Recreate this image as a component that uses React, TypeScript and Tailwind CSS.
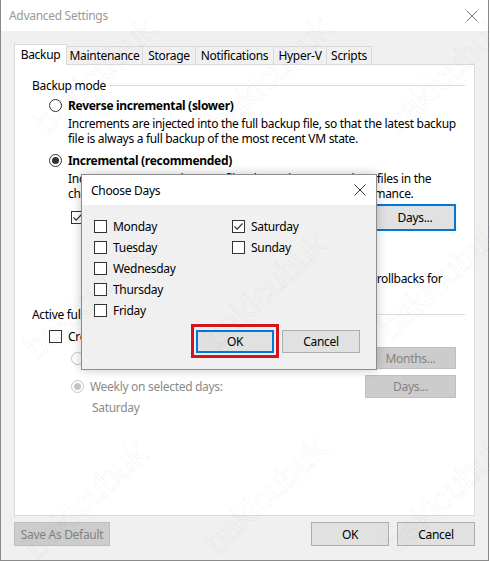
import React from "react";

const font = "font-['Segoe_UI','Noto_Sans',sans-serif]";

const Radio = ({ checked, disabled }: { checked?: boolean; disabled?: boolean }) => (
  <span
    className={`w-[13px] h-[13px] shrink-0 rounded-full border bg-white flex items-center justify-center ${
      disabled ? "border-[#c4c4c4]" : "border-[#333333]"
    }`}
  >
    {checked && (
      <span className={`w-[7px] h-[7px] rounded-full ${disabled ? "bg-[#c4c4c4]" : "bg-[#333333]"}`} />
    )}
  </span>
);

const Check = ({ checked }: { checked?: boolean }) => (
  <span className="w-[13px] h-[13px] shrink-0 border border-[#333333] bg-white flex items-center justify-center">
    {checked && (
      <svg width="11" height="11" viewBox="0 0 11 11">
        <path d="M1.5 5.5 L4.2 8.2 L9.5 2.5" fill="none" stroke="#333" strokeWidth="1.2" />
      </svg>
    )}
  </span>
);

const Btn = ({
  children,
  w,
  disabled,
  focus,
  h = "h-[23px]",
}: {
  children: React.ReactNode;
  w: string;
  disabled?: boolean;
  focus?: boolean;
  h?: string;
}) => (
  <div
    className={`${w} ${h} shrink-0 flex items-center justify-center ${
      disabled
        ? "bg-[#cccccc] border border-[#bfbfbf] text-[#838383]"
        : focus
        ? "bg-[#e1e1e1] border-2 border-[#0078d7]"
        : "bg-[#e1e1e1] border border-[#adadad]"
    }`}
  >
    {children}
  </div>
);

const CloseX = ({ color = "#333" }: { color?: string }) => (
  <svg width="12" height="12" viewBox="0 0 12 12">
    <path d="M0.5 0.5 L11.5 11.5 M11.5 0.5 L0.5 11.5" stroke={color} strokeWidth="1" />
  </svg>
);

const marks = [
  [95, 75],
  [270, 75],
  [445, 75],
  [85, 300],
  [265, 290],
  [440, 280],
  [85, 500],
  [265, 495],
  [445, 495],
];

export default function App() {
  const tabs = [
    ["Maintenance", "w-[76px]"],
    ["Storage", "w-[53px]"],
    ["Notifications", "w-[78px]"],
    ["Hyper-V", "w-[53px]"],
    ["Scripts", "w-[45px]"],
  ];

  return (
    <div
      className={`relative w-[490px] h-[561px] bg-white overflow-hidden text-[12px] leading-[15px] tracking-[-0.3px] text-black ${font}`}
    >
      <div className="w-[489px] h-[561px] flex flex-col bg-[#f0f0f0] border border-t-0 border-[#8a8a8a]">
        {/* title bar */}
        <div className="h-[31px] bg-white flex items-center justify-between pl-[8px] pr-[10px]">
          <span className="text-[#999999] text-[12px]">Advanced Settings</span>
          <CloseX color="#777" />
        </div>

        <div className="pl-[13px] pr-[13px] pt-[12px]">
          {/* tabs */}
          <div className="flex items-end h-[21px]">
            <div className="w-[53px] h-[21px] bg-white border border-b-0 border-[#d9d9d9] flex items-center justify-center relative top-[1px] pb-[2px]">
              Backup
            </div>
            {tabs.map(([t, w]) => (
              <div
                key={t}
                className={`${w} h-[18px] border border-l-0 border-b-0 border-[#d9d9d9] bg-[#f0f0f0] flex items-center justify-center`}
              >
                {t}
              </div>
            ))}
          </div>

          {/* panel */}
          <div className="h-[452px] bg-white border border-[#d9d9d9] flex flex-col">
            {/* Backup mode */}
            <div className="mt-[13px] h-[15px] flex items-center pl-[17px] pr-[9px] gap-[4px]">
              <span>Backup mode</span>
              <span className="flex-1 h-px bg-[#dcdcdc]" />
            </div>
            <div className="mt-[5px] h-[15px] flex items-center pl-[34px] gap-[6px]">
              <Radio />
              <span className="font-bold">Reverse incremental (slower)</span>
            </div>
            <div className="mt-[3px] pl-[53px] whitespace-nowrap">
              <div>Increments are injected into the full backup file, so that the latest backup</div>
              <div>file is always a full backup of the most recent VM state.</div>
            </div>
            <div className="mt-[7px] h-[15px] flex items-center pl-[34px] gap-[6px]">
              <Radio checked />
              <span className="font-bold">Incremental (recommended)</span>
            </div>
            <div className="mt-[3px] pl-[53px] whitespace-nowrap">
              <div>Increments are saved to new files dependent on previous files in the</div>
              <div>chain. This backup mode provides the best backup performance.</div>
            </div>
            <div className="mt-[3px] h-[27px] flex items-center pl-[56px] pr-[18px] gap-[6px]">
              <Check checked />
              <span className="flex-1">Create synthetic full backups periodically</span>
              <Btn w="w-[82px]" h="h-[27px]" focus>
                Days...
              </Btn>
            </div>
            <div className="mt-[8px] h-[15px] pl-[75px]">Create on: Saturday</div>
            <div className="mt-[17px] pl-[75px] whitespace-nowrap">
              <div>Transform previous backup chains and increments to rollbacks for</div>
              <div>better restore performance</div>
            </div>
            {/* Active full backup */}
            <div className="mt-[6px] h-[15px] flex items-center pl-[17px] pr-[9px] gap-[4px]">
              <span>Active full backup</span>
              <span className="flex-1 h-px bg-[#dcdcdc]" />
            </div>
            <div className="mt-[7px] h-[15px] flex items-center pl-[34px] gap-[6px]">
              <Check />
              <span>Create active full backups periodically</span>
            </div>
            <div className="mt-[3px] h-[22px] flex items-center pl-[56px] pr-[18px] gap-[6px] text-[#8a8a8a]">
              <Radio disabled />
              <span className="flex-1">Monthly on: First Monday of every month</span>
              <Btn w="w-[91px]" h="h-[22px]" disabled>
                Months...
              </Btn>
            </div>
            <div className="mt-[6px] h-[23px] flex items-center pl-[56px] pr-[18px] gap-[6px] text-[#8a8a8a]">
              <Radio checked disabled />
              <span className="flex-1">Weekly on selected days:</span>
              <Btn w="w-[91px]" h="h-[23px]" disabled>
                Days...
              </Btn>
            </div>
            <div className="mt-[2px] h-[15px] pl-[77px] text-[#8a8a8a]">Saturday</div>
          </div>

          {/* bottom buttons */}
          <div className="mt-[6px] flex items-center">
            <Btn w="w-[96px]" h="h-[24px]" disabled>
              Save As Default
            </Btn>
            <div className="flex-1" />
            <Btn w="w-[78px]" h="h-[24px]">
              OK
            </Btn>
            <div className="w-[8px]" />
            <Btn w="w-[78px]" h="h-[24px]">
              Cancel
            </Btn>
          </div>
        </div>
      </div>

      {/* Choose Days dialog */}
      <div className="absolute left-[81px] top-[174px] w-[296px] h-[196px] border border-[#8c8c8c] bg-[#f0f0f0] shadow-[0_0_10px_rgba(0,0,0,0.22)] flex flex-col">
        <div className="h-[30px] bg-white flex items-center justify-between pl-[9px] pr-[10px]">
          <span>Choose Days</span>
          <CloseX />
        </div>
        <div className="pt-[11px] pl-[12px] flex">
          <div className="w-[138px] flex flex-col">
            {["Monday", "Tuesday", "Wednesday", "Thursday", "Friday"].map((d) => (
              <div key={d} className="h-[21px] flex items-center gap-[6px]">
                <Check />
                <span>{d}</span>
              </div>
            ))}
          </div>
          <div className="flex flex-col">
            {[
              ["Saturday", true],
              ["Sunday", false],
            ].map(([d, c]) => (
              <div key={d as string} className="h-[21px] flex items-center gap-[6px]">
                <Check checked={c as boolean} />
                <span>{d}</span>
              </div>
            ))}
          </div>
        </div>
        <div className="mt-[9px] flex justify-end pr-[16px] gap-[8px]">
          <div className="relative">
            <Btn w="w-[78px]" h="h-[23px]" focus>
              OK
            </Btn>
            <div className="absolute left-[-5px] right-[-5px] top-[-6px] bottom-[-5px] border-[3px] border-[#d7141c]" />
          </div>
          <Btn w="w-[78px]" h="h-[23px]">
            Cancel
          </Btn>
        </div>
      </div>

      {/* watermark */}
      {marks.map(([x, y], i) => (
        <div
          key={i}
          className="absolute pointer-events-none -translate-x-1/2 -translate-y-1/2 -rotate-[43deg] text-[34px] tracking-normal leading-none font-['Liberation_Sans',sans-serif] text-transparent [-webkit-text-stroke:1px_rgba(0,0,0,0.05)]"
          style={{ left: x, top: y }}
        >
          bakicubuk
        </div>
      ))}
    </div>
  );
}
